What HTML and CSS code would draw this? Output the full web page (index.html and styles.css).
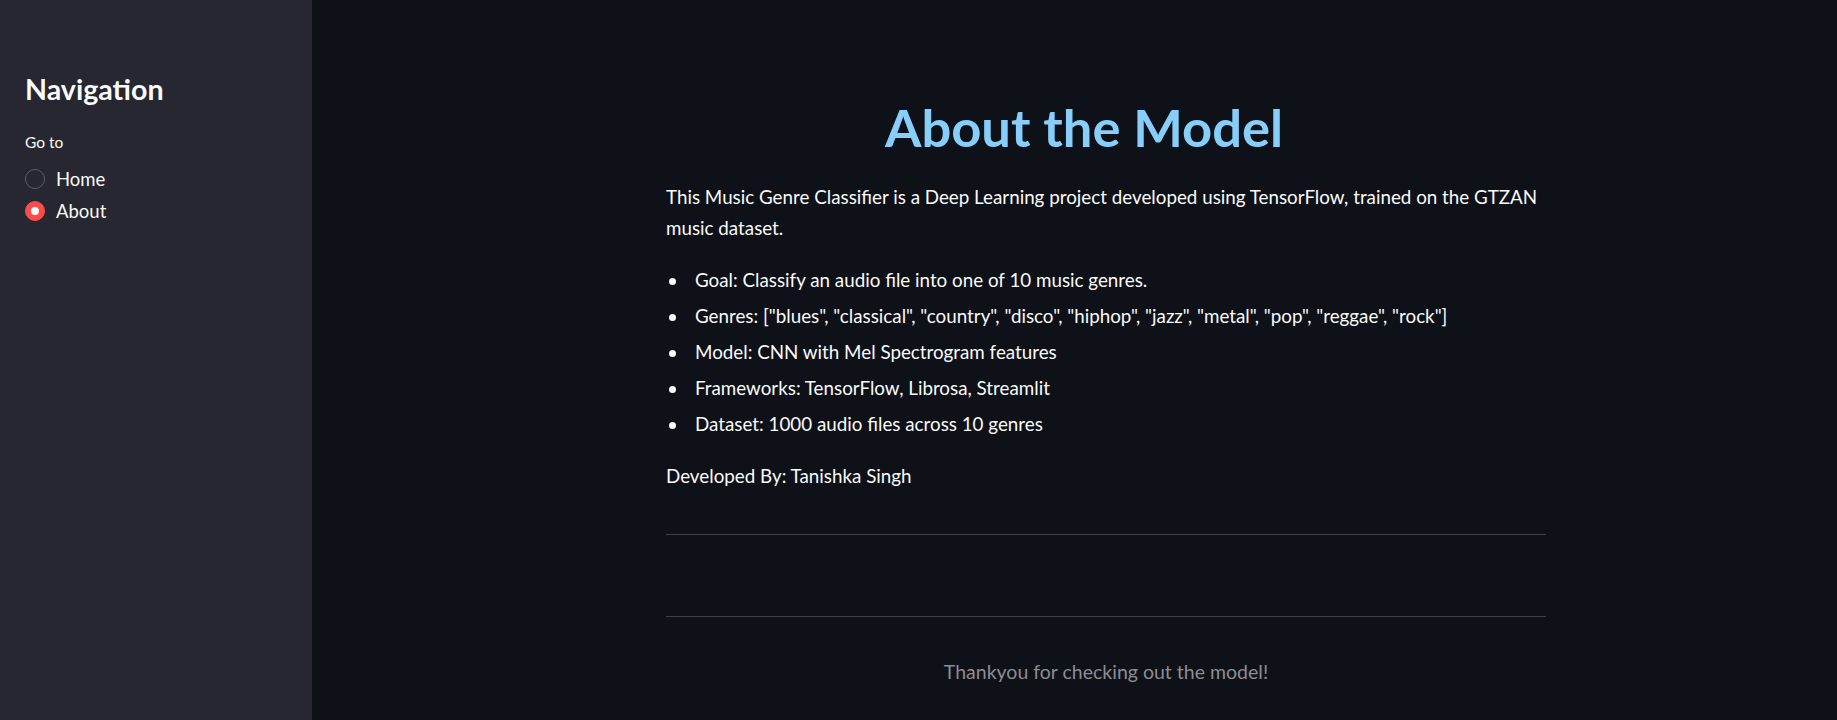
FILE: index.html
```html
<!DOCTYPE html>
<html lang="en">
<head>
<meta charset="utf-8">
<title>About the Model</title>
<link rel="stylesheet" href="styles.css">
</head>
<body>
<div class="app">
  <aside class="sidebar">
    <h2 class="nav-title">Navigation</h2>
    <div class="radio-label">Go to</div>
    <div class="radio-group">
      <label class="radio"><span class="dot"></span><span class="radio-text">Home</span></label>
      <label class="radio checked"><span class="dot"></span><span class="radio-text">About</span></label>
    </div>
  </aside>
  <main class="main">
    <div class="block">
      <h1 class="title">About the Model</h1>
      <p class="para">This Music Genre Classifier is a Deep Learning project developed using TensorFlow, trained on the GTZAN music dataset.</p>
      <ul class="list">
        <li>Goal: Classify an audio file into one of 10 music genres.</li>
        <li>Genres: ["blues", "classical", "country", "disco", "hiphop", "jazz", "metal", "pop", "reggae", "rock"]</li>
        <li>Model: CNN with Mel Spectrogram features</li>
        <li>Frameworks: TensorFlow, Librosa, Streamlit</li>
        <li>Dataset: 1000 audio files across 10 genres</li>
      </ul>
      <p class="para">Developed By: Tanishka Singh</p>
      <hr class="rule rule-first">
      <hr class="rule rule-second">
      <p class="thanks">Thankyou for checking out the model!</p>
    </div>
  </main>
</div>
</body>
</html>
```
FILE: styles.css
```css
* { box-sizing: border-box; }
html, body {
  margin: 0;
  padding: 0;
  height: 100%;
  background: #0e1117;
  font-family: Lato, "Noto Sans", sans-serif;
  color: #fafafa;
  overflow: hidden;
}
.app {
  display: flex;
  height: 720px;
}
.sidebar {
  width: 312px;
  flex: 0 0 312px;
  background: #262730;
  padding: 0 24px 0 25px;
}
.nav-title {
  margin: 0;
  padding-top: 69px;
  font-size: 28.6px;
  line-height: 40px;
  font-weight: 700;
  color: #fafafa;
}
.radio-label {
  margin-top: 23px;
  font-size: 15.5px;
  line-height: 20px;
}
.radio-group {
  margin-top: 17px;
  display: flex;
  flex-direction: column;
  gap: 12px;
}
.radio {
  display: flex;
  align-items: center;
  height: 20px;
  font-size: 18.5px;
}
.dot {
  width: 20px;
  height: 20px;
  border-radius: 50%;
  border: 1.5px solid #5b5d66;
  margin-right: 11px;
  flex: 0 0 20px;
  position: relative;
}
.radio.checked .dot {
  background: #ff4b4b;
  border-color: #ff4b4b;
}
.radio.checked .dot::after {
  content: "";
  position: absolute;
  left: 50%;
  top: 50%;
  width: 8px;
  height: 8px;
  margin: -4px 0 0 -4px;
  border-radius: 50%;
  background: #fafafa;
}
.main {
  flex: 1;
  padding: 96.5px 0 0 63px;
}
.block {
  width: 880px;
  margin: 0 auto;
}
.title {
  margin: 0;
  padding-right: 44px;
  text-align: center;
  color: #87cefa;
  font-size: 52.5px;
  line-height: 60px;
  font-weight: 700;
}
.para {
  margin: 24px 0 0;
  font-size: 18.8px;
  line-height: 31.3px;
}
.list {
  margin: 20.5px 0 0;
  padding-left: 0;
  list-style: none;
  font-size: 18.8px;
  line-height: 31.3px;
}
.list li {
  margin-top: 4.8px;
  padding-left: 29px;
}
.list li:first-child { margin-top: 0; }
.list li::before {
  content: "";
  display: inline-block;
  width: 7px;
  height: 7px;
  border-radius: 50%;
  background: #fafafa;
  margin-left: -26px;
  margin-right: 19px;
  vertical-align: 2px;
}
.list + .para { margin-top: 21px; }
.rule {
  border: 0;
  border-top: 1px solid rgba(250, 250, 250, 0.2);
  margin: 0;
}
.rule-first { margin-top: 42px; }
.rule-second { margin-top: 81px; }
.thanks {
  margin: 39px 0 0;
  text-align: center;
  color: #8b8d93;
  font-size: 19.5px;
  line-height: 31.3px;
}
```
